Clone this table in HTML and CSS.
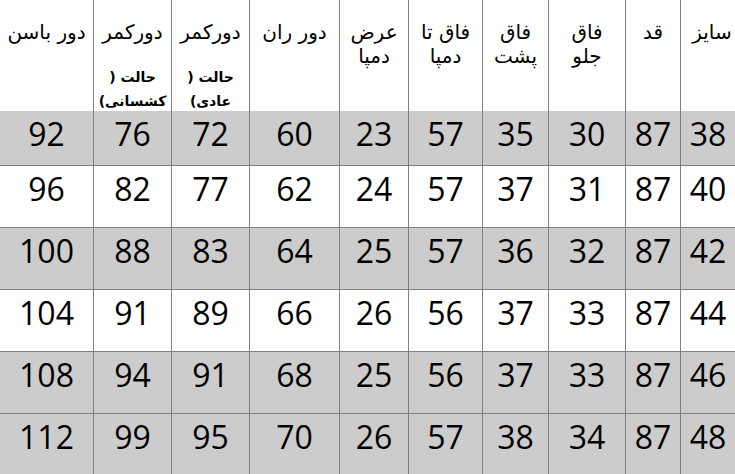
FILE: index.html
```html
<!DOCTYPE html>
<html lang="fa">
<head>
<meta charset="utf-8">
<title>جدول سایز</title>
<link rel="stylesheet" href="styles.css">
</head>
<body>
<div class="chart" dir="rtl">
  <div class="row head">
    <div class="cell"><div class="h size">سایز</div></div>
    <div class="cell"><div class="h">قد</div></div>
    <div class="cell"><div class="h">فاق<br>جلو</div></div>
    <div class="cell"><div class="h">فاق<br>پشت</div></div>
    <div class="cell"><div class="h">فاق تا<br>دمپا</div></div>
    <div class="cell"><div class="h">عرض<br>دمپا</div></div>
    <div class="cell"><div class="h">دور ران</div></div>
    <div class="cell"><div class="h">دورکمر</div><div class="sub">حالت (<br>عادی)</div></div>
    <div class="cell"><div class="h">دورکمر</div><div class="sub">حالت (<br>کشسانی)</div></div>
    <div class="cell"><div class="h">دور باسن</div></div>
  </div>
  <div class="row gray first">
    <div class="cell">38</div><div class="cell">87</div><div class="cell">30</div><div class="cell">35</div><div class="cell">57</div><div class="cell">23</div><div class="cell">60</div><div class="cell">72</div><div class="cell">76</div><div class="cell">92</div>
  </div>
  <div class="row">
    <div class="cell">40</div><div class="cell">87</div><div class="cell">31</div><div class="cell">37</div><div class="cell">57</div><div class="cell">24</div><div class="cell">62</div><div class="cell">77</div><div class="cell">82</div><div class="cell">96</div>
  </div>
  <div class="row gray">
    <div class="cell">42</div><div class="cell">87</div><div class="cell">32</div><div class="cell">36</div><div class="cell">57</div><div class="cell">25</div><div class="cell">64</div><div class="cell">83</div><div class="cell">88</div><div class="cell">100</div>
  </div>
  <div class="row">
    <div class="cell">44</div><div class="cell">87</div><div class="cell">33</div><div class="cell">37</div><div class="cell">56</div><div class="cell">26</div><div class="cell">66</div><div class="cell">89</div><div class="cell">91</div><div class="cell">104</div>
  </div>
  <div class="row gray">
    <div class="cell">46</div><div class="cell">87</div><div class="cell">33</div><div class="cell">37</div><div class="cell">56</div><div class="cell">25</div><div class="cell">68</div><div class="cell">91</div><div class="cell">94</div><div class="cell">108</div>
  </div>
  <div class="row gray">
    <div class="cell">48</div><div class="cell">87</div><div class="cell">34</div><div class="cell">38</div><div class="cell">57</div><div class="cell">26</div><div class="cell">70</div><div class="cell">95</div><div class="cell">99</div><div class="cell">112</div>
  </div>
</div>
</body>
</html>
```
FILE: styles.css
```css
html, body {
  margin: 0;
  padding: 0;
  background: #ffffff;
}

.chart {
  width: 735px;
  overflow: hidden;
  color: #000000;
}

.row {
  display: grid;
  grid-template-columns: 55px 55px 77px 66px 74px 69px 90px 78px 78px 93px;
  height: 62px;
  font-family: "Open Sans", "Liberation Sans", sans-serif;
  font-size: 32px;
  line-height: 32px;
}

.row.first {
  height: 55px;
}

.row.gray .cell {
  background: #cccccc;
}

.cell {
  box-sizing: border-box;
  border-left: 1px solid #808080;
  border-bottom: 1px solid #808080;
  text-align: center;
  padding-top: 7px;
}

.cell:last-child {
  border-left: none;
}

.head {
  height: 111px;
  font-family: "DejaVu Sans", "Liberation Sans", sans-serif;
  font-size: 20px;
  line-height: 24px;
}

.head .cell {
  border-bottom-width: 2px;
  padding-top: 20px;
}

.h.size {
  padding-left: 8px;
}

.sub {
  margin-top: 21px;
  font-size: 14px;
  font-weight: bold;
  line-height: 24px;
}
```
